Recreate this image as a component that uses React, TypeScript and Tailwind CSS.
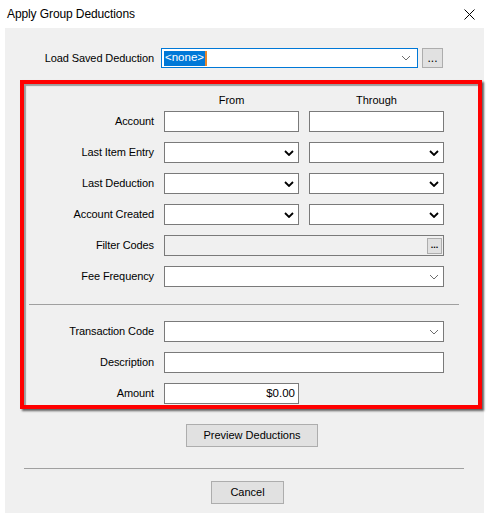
import React from "react";

const font = { fontFamily: '"Liberation Sans", Arial, sans-serif' };

function Chevron({ bold }: { bold?: boolean }) {
  return bold ? (
    <svg width="10" height="6" viewBox="0 0 10 6" className="shrink-0">
      <path d="M1 1 L5 5 L9 1" fill="none" stroke="#000" strokeWidth="1.8" />
    </svg>
  ) : (
    <svg width="10" height="6" viewBox="0 0 10 6" className="shrink-0">
      <path d="M1 1 L5 5 L9 1" fill="none" stroke="#6d6d6d" strokeWidth="1" />
    </svg>
  );
}

function TextBox({ w, value }: { w: string; value?: string }) {
  return (
    <div
      className={`${w} flex h-[21px] items-center justify-end border border-[#7a7a7a] bg-white pr-[3px] text-[11.5px] text-black`}
    >
      {value}
    </div>
  );
}

function DatePick({ w }: { w: string }) {
  return (
    <div
      className={`${w} flex h-[21px] items-center justify-end border border-[#7a7a7a] bg-white pr-[4px]`}
    >
      <Chevron bold />
    </div>
  );
}

function Combo({ w }: { w: string }) {
  return (
    <div
      className={`${w} flex h-[21px] items-center justify-end border border-[#7a7a7a] bg-white pr-[4px]`}
    >
      <Chevron />
    </div>
  );
}

function Row({ label, children }: { label: string; children: React.ReactNode }) {
  return (
    <div className="flex h-[21px] items-center">
      <div className="w-[130px] text-right text-[11px] tracking-[-0.1px] text-black">{label}</div>
      <div className="ml-[10px] flex gap-[10px]">{children}</div>
    </div>
  );
}

export default function App() {
  return (
    <div className="h-[518px] w-[490px] overflow-hidden bg-white" style={font}>
      {/* Title bar */}
      <div className="flex h-[28px] items-center justify-between pl-[7px] pr-[15px]">
        <span className="text-[12px] tracking-[-0.1px] text-black">Apply Group Deductions</span>
        <svg width="11" height="11" viewBox="0 0 11 11">
          <path d="M0.5 0.5 L10.5 10.5 M10.5 0.5 L0.5 10.5" stroke="#000" strokeWidth="1" />
        </svg>
      </div>

      {/* Body */}
      <div className="ml-[5px] h-[485px] w-[479px] bg-[#f0f0f0] pt-[20px]">
        {/* Load Saved Deduction */}
        <div className="flex h-[20px] items-center">
          <div className="w-[149px] text-right text-[11px] tracking-[-0.1px] text-black">Load Saved Deduction</div>
          <div className="ml-[7px] flex h-[20px] w-[257px] items-center justify-between border border-[#0078d7] bg-white pl-[2px] pr-[6px]">
            <span className="flex h-[15px] items-center border-r-2 border-[#e8862a] bg-[#0078d7] px-[1px] text-[11.5px] text-white">
              &lt;none&gt;
            </span>
            <Chevron />
          </div>
          <div className="ml-[4px] flex h-[20px] w-[21px] items-end justify-center border border-[#adadad] bg-[#e1e1e1] pb-[3px] text-[12px] leading-none text-black">
            ...
          </div>
        </div>

        {/* Highlighted criteria area */}
        <div className="ml-[15px] mt-[12px] h-[329px] w-[462px] border-[4px] border-[#ff0000] shadow-[2px_2px_2px_rgba(0,0,0,0.6),inset_2px_2px_1px_rgba(0,0,0,0.35)]">
          <div className="mt-[8px] flex h-[16px] text-[11px] text-black">
            <div className="ml-[140px] w-[135px] text-center">From</div>
            <div className="ml-[10px] w-[135px] text-center">Through</div>
          </div>
          <div className="mt-[3px] flex flex-col gap-[10px]">
            <Row label="Account">
              <TextBox w="w-[135px]" />
              <TextBox w="w-[135px]" />
            </Row>
            <Row label="Last Item Entry">
              <DatePick w="w-[135px]" />
              <DatePick w="w-[135px]" />
            </Row>
            <Row label="Last Deduction">
              <DatePick w="w-[135px]" />
              <DatePick w="w-[135px]" />
            </Row>
            <Row label="Account Created">
              <DatePick w="w-[135px]" />
              <DatePick w="w-[135px]" />
            </Row>
            <Row label="Filter Codes">
              <div className="flex h-[21px] w-[280px] items-center justify-end border border-[#7a7a7a] bg-[#f0f0f0] pr-[1px]">
                <div className="flex h-[16px] w-[15px] items-end justify-center border border-[#adadad] bg-[#e1e1e1] pb-[3px] text-[9px] font-bold leading-none text-black">
                  ...
                </div>
              </div>
            </Row>
            <Row label="Fee Frequency">
              <Combo w="w-[280px]" />
            </Row>
          </div>
          <div className="ml-[5px] mt-[17px] h-px w-[430px] bg-[#a0a0a0]" />
          <div className="mt-[16px] flex flex-col gap-[10px]">
            <Row label="Transaction Code">
              <Combo w="w-[280px]" />
            </Row>
            <Row label="Description">
              <TextBox w="w-[280px]" />
            </Row>
            <Row label="Amount">
              <TextBox w="w-[135px]" value="$0.00" />
            </Row>
          </div>
        </div>

        {/* Buttons */}
        <div className="ml-[181px] mt-[15px] flex h-[23px] w-[132px] items-center justify-center border border-[#adadad] bg-[#e1e1e1] text-[11px] text-black">
          Preview Deductions
        </div>
        <div className="ml-[19px] mt-[21px] h-px w-[440px] bg-[#a0a0a0]" />
        <div className="ml-[206px] mt-[12px] flex h-[23px] w-[73px] items-center justify-center border border-[#adadad] bg-[#e1e1e1] text-[11px] text-black">
          Cancel
        </div>
      </div>
    </div>
  );
}
